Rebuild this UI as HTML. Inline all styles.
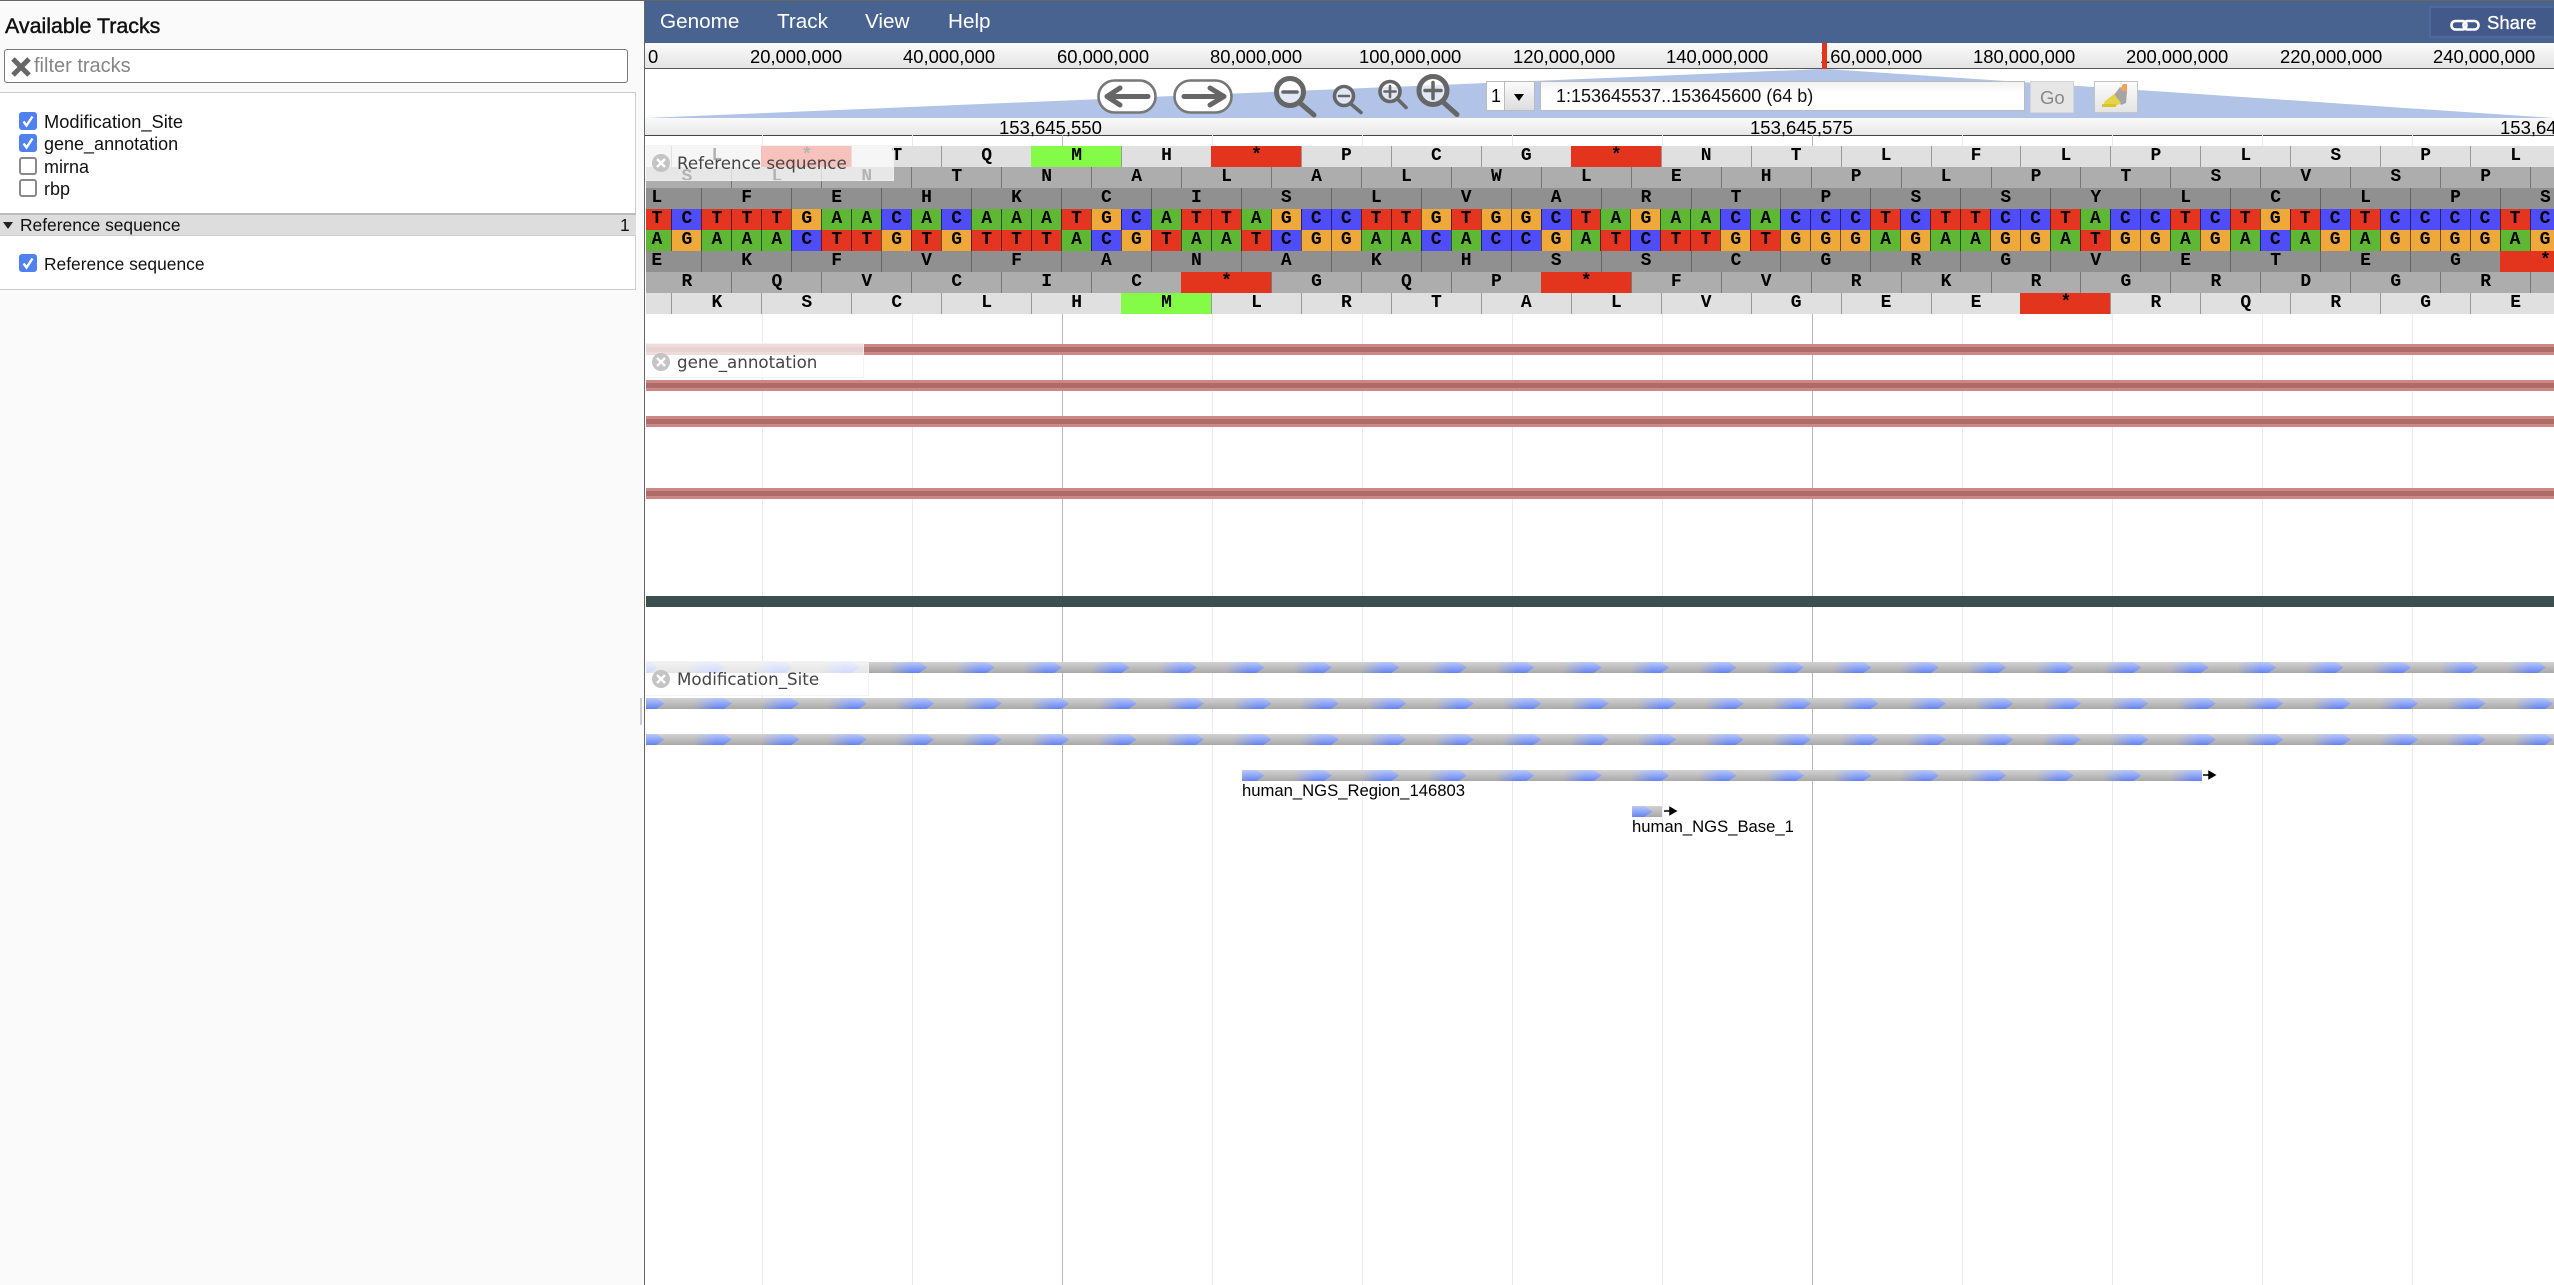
<!DOCTYPE html>
<html lang="en"><head><meta charset="utf-8"><title>JBrowse</title>
<style>
html,body{margin:0;padding:0;width:2554px;height:1285px;overflow:hidden;background:#fff;font-family:"Liberation Sans",Arial,sans-serif;color:#000}
.a{position:absolute;white-space:nowrap}
#left{left:0;top:0;width:644px;height:1285px;background:#fafafa}
#box{left:0;top:92px;width:635px;height:196px;background:#fff;border:1px solid #ccc;border-left:0}
#cat{left:0;top:213px;width:636px;height:20px;background:#ddd;border-top:2px solid #bbb;border-bottom:1px solid #ccc}
.it{font-size:18px;line-height:22px;color:#111;left:44px}
.cb{position:absolute;left:19px;width:18px;height:18px;box-sizing:border-box;border-radius:3px}
.cb.on{background:#4f81f0}
.cb.off{background:#fff;border:2px solid #8a8a8a}
.cb svg{position:absolute;left:0;top:0}
.ov{font-size:18.4px;line-height:22px;top:46px}
.gl{position:absolute;top:135px;height:1150px;width:1px;background:#ebebeb}
.gm{background:#b8b8b8}
#seq{position:absolute;left:646px;top:146px;width:1908px;height:168px;overflow:hidden}
.r{position:absolute;height:21px;display:flex}
.r b,.r i{flex:none;box-sizing:border-box;height:21px;font:bold 18px/21px "Liberation Mono",monospace;text-align:center;font-style:normal;color:#000}
.r b{width:89.94px;border-left:1px solid #777}
.r i{width:29.98px;border-left:1px solid rgba(0,0,0,.55)}
.l1 b{background:#e0e0e0;border-left-color:#999}
.l2 b{background:#adadad;border-left-color:#777}
.l3 b{background:#909090;border-left-color:#666}
.r b.x{background:#e3341d;border-left-color:#e3341d}
.r b.m{background:#84fb46;border-left-color:#84fb46}
.T{background:#e3351f}.C{background:#4f4cf9}.A{background:#5fb834}.G{background:#efa93a}
.lab{position:absolute;left:646px;box-sizing:border-box;background:rgba(255,255,255,.7);border:1px solid rgba(240,240,240,.8);border-left:0}
.lt{position:absolute;font:16.7px/20px "DejaVu Sans",sans-serif;color:#444;white-space:nowrap}
.fl{font-size:16.65px;line-height:20px;color:#000}
</style></head><body>

<div class="a" id="left"></div>
<div class="a" style="left:0;top:0;width:2554px;height:1px;background:#666;z-index:9"></div>
<div class="a" style="left:644px;top:0;width:1px;height:1285px;background:#666;z-index:9"></div>
<div class="a" style="left:640px;top:698px;width:2px;height:27px;background:#ccc"></div>

<div class="a" style="left:5px;top:13px;font-size:21.4px;line-height:26px;color:#111;-webkit-text-stroke:.45px #111">Available Tracks</div>
<div class="a" style="left:4px;top:49px;width:624px;height:34px;box-sizing:border-box;border:1px solid #777;border-radius:3px;background:#fff"></div>
<svg class="a" style="left:10px;top:56px" width="22" height="22" viewBox="0 0 22 22"><path d="M3 3L19 19M19 3L3 19" stroke="#666" stroke-width="5"/></svg>
<div class="a" style="left:34px;top:53px;font-size:20px;line-height:26px;color:#858585">filter tracks</div>

<div class="a" id="box"></div>
<div class="cb on" style="top:112px"><svg width="18" height="18"><path d="M4.5 9.5L7.5 13.5L13.5 4.5" fill="none" stroke="#fff" stroke-width="2.4"/></svg></div>
<div class="cb on" style="top:134px"><svg width="18" height="18"><path d="M4.5 9.5L7.5 13.5L13.5 4.5" fill="none" stroke="#fff" stroke-width="2.4"/></svg></div>
<div class="cb off" style="top:157px"></div>
<div class="cb off" style="top:179px"></div>
<div class="a it" style="top:111px;font-size:18.25px">Modification_Site</div>
<div class="a it" style="top:133px">gene_annotation</div>
<div class="a it" style="top:156px">mirna</div>
<div class="a it" style="top:178px">rbp</div>
<div class="a" id="cat"></div>
<div class="a" style="left:3px;top:222px;width:0;height:0;border-left:5.5px solid transparent;border-right:5.5px solid transparent;border-top:7px solid #222"></div>
<div class="a" style="left:20px;top:214px;font-size:17.4px;line-height:22px;color:#111">Reference sequence</div>
<div class="a" style="left:620px;top:214px;font-size:17.4px;line-height:22px;color:#111">1</div>
<div class="cb on" style="top:254px"><svg width="18" height="18"><path d="M4.5 9.5L7.5 13.5L13.5 4.5" fill="none" stroke="#fff" stroke-width="2.4"/></svg></div>
<div class="a it" style="top:253px;font-size:17.4px">Reference sequence</div>

<!-- menu -->
<div class="a" style="left:645px;top:1px;width:1909px;height:42px;background:#496390"></div>
<div class="a" style="left:660px;top:9px;font-size:20.7px;line-height:25px;color:#fff">Genome</div>
<div class="a" style="left:777px;top:9px;font-size:20.7px;line-height:25px;color:#fff">Track</div>
<div class="a" style="left:865px;top:9px;font-size:20.7px;line-height:25px;color:#fff">View</div>
<div class="a" style="left:948px;top:9px;font-size:20.7px;line-height:25px;color:#fff">Help</div>
<div class="a" style="left:2429px;top:6px;width:124px;height:32px;box-sizing:border-box;background:#42598a;border:2px solid #51699a;border-right:0"></div>
<svg class="a" style="left:2450px;top:17px" width="30" height="16" viewBox="0 0 30 16"><rect x="1.5" y="4" width="15" height="8.5" rx="4" fill="none" stroke="#fff" stroke-width="2.6"/><rect x="13.5" y="4" width="15" height="8.5" rx="4" fill="none" stroke="#fff" stroke-width="2.6"/></svg>
<div class="a" style="left:2487px;top:12px;font-size:18.5px;line-height:22px;color:#fff;-webkit-text-stroke:.3px #fff">Share</div>

<!-- overview -->
<div class="a" style="left:645px;top:43px;width:1909px;height:25px;background:linear-gradient(#fbfbfb,#e4e4e4);border-bottom:1px solid #555"></div>
<div class="a ov" style="left:648px">0</div>
<div class="a ov" style="left:750px">20,000,000</div>
<div class="a ov" style="left:903px">40,000,000</div>
<div class="a ov" style="left:1057px">60,000,000</div>
<div class="a ov" style="left:1210px">80,000,000</div>
<div class="a ov" style="left:1359px">100,000,000</div>
<div class="a ov" style="left:1513px">120,000,000</div>
<div class="a ov" style="left:1666px">140,000,000</div>
<div class="a ov" style="left:1820px">160,000,000</div>
<div class="a ov" style="left:1973px">180,000,000</div>
<div class="a ov" style="left:2126px">200,000,000</div>
<div class="a ov" style="left:2280px">220,000,000</div>
<div class="a ov" style="left:2433px">240,000,000</div>
<div class="a" style="left:1822px;top:43px;width:5px;height:26px;background:#e3341d"></div>

<!-- nav area with polygon and icons -->
<svg class="a" style="left:0;top:0" width="2554" height="120" viewBox="0 0 2554 120">
<polygon points="1822,69 1827,69 2554,118 646,118" fill="#b1c3e7"/>
<rect x="1098.5" y="80.5" width="57" height="32" rx="16" fill="#fff" stroke="#777" stroke-width="2.6"/>
<rect x="1174.5" y="80.5" width="57" height="32" rx="16" fill="#fff" stroke="#777" stroke-width="2.6"/>
<g fill="none" stroke="#666" stroke-width="5" stroke-linecap="round" stroke-linejoin="round">
<path d="M1148 96.5H1107M1120 88L1107 96.5L1120 105"/>
<path d="M1184 96.5H1224M1210 88L1224 96.5L1210 105"/>
<circle cx="1290" cy="92" r="13.5" fill="#fff" fill-opacity=".6"/><path d="M1300 103L1314 115"/><path d="M1283 92H1297" stroke-width="3.5"/>
<circle cx="1344" cy="96" r="9.5" fill="#fff" fill-opacity=".6" stroke-width="3.6"/><path d="M1351 104L1361 112.5" stroke-width="3.6"/><path d="M1339 96H1349" stroke-width="2.6"/>
<circle cx="1390" cy="91.5" r="10" fill="#fff" fill-opacity=".6" stroke-width="3.6"/><path d="M1397.5 99L1406 107.5" stroke-width="3.6"/><path d="M1384.5 91.5H1395.5M1390 86V97" stroke-width="2.6"/>
<circle cx="1433" cy="90.5" r="14" fill="#fff" fill-opacity=".6"/><path d="M1443 102L1457 114.5"/><path d="M1425 90.5H1441M1433 82.5V98.5" stroke-width="3.5"/>
</g>
</svg>

<!-- ref select / location -->
<div class="a" style="left:1486px;top:81px;width:48px;height:30px;box-sizing:border-box;border:1px solid #bbb;background:#fff"></div>
<div class="a" style="left:1504px;top:81px;width:31px;height:30px;box-sizing:border-box;border:1px solid #bbb;background:linear-gradient(#fbfbfb,#ddd)"></div>
<div class="a" style="left:1491px;top:84px;font-size:18px;line-height:24px">1</div>
<div class="a" style="left:1514px;top:94px;width:0;height:0;border-left:5.5px solid transparent;border-right:5.5px solid transparent;border-top:7px solid #000"></div>
<div class="a" style="left:1540px;top:81px;width:485px;height:30px;box-sizing:border-box;border:1px solid #bbb;background:linear-gradient(#f2f2f2,#fff 40%)"></div>
<div class="a" style="left:1556px;top:84px;font-size:18px;line-height:24px;color:#111">1:153645537..153645600 (64 b)</div>
<div class="a" style="left:2030px;top:81px;width:44px;height:32px;box-sizing:border-box;border:1px solid #d5d5d5;background:#e6e6e6"></div>
<div class="a" style="left:2040px;top:86px;font-size:18.5px;line-height:24px;color:#888">Go</div>
<div class="a" style="left:2094px;top:81px;width:44px;height:32px;box-sizing:border-box;border:1.5px solid #c4c4c4;background:linear-gradient(#fcfcfc,#e4e4e4)"></div>
<svg class="a" style="left:2100px;top:83px" width="30" height="26" viewBox="0 0 30 26">
<path d="M14 12L20 4L27 9L26 20L21 22Z" fill="#a5a5a5"/>
<path d="M20 7L23 1H27V9Z" fill="#eea35c"/>
<path d="M3 22L5 18L14 11L21 20L16 23H12Z" fill="#e6d34c"/>
<path d="M2 21H16V24H2Z" fill="#dcc422"/>
</svg>

<!-- track scale -->
<div class="a" style="left:645px;top:118px;width:1909px;height:17px;background:linear-gradient(#fafafa,#e9e9e9);border-bottom:1px solid #444"></div>
<div class="gl" style="left:762px"></div><div class="gl" style="left:912px"></div><div class="gl gm" style="left:1062px"></div>
<div class="gl" style="left:1212px"></div><div class="gl" style="left:1362px"></div><div class="gl" style="left:1512px"></div>
<div class="gl" style="left:1662px"></div><div class="gl gm" style="left:1812px"></div><div class="gl" style="left:1962px"></div>
<div class="gl" style="left:2112px"></div><div class="gl" style="left:2262px"></div><div class="gl" style="left:2412px"></div>
<div class="a" style="left:999px;top:117px;font-size:18.5px;line-height:22px">153,645,550</div>
<div class="a" style="left:1750px;top:117px;font-size:18.5px;line-height:22px">153,645,575</div>
<div class="a" style="left:2500px;top:117px;font-size:18.5px;line-height:22px">153,645,600</div>

<!-- sequence -->
<div id="seq">
<div class="r l1" style="top:0;left:-64.54px"><b></b><b>L</b><b class="x">*</b><b>T</b><b>Q</b><b class="m">M</b><b>H</b><b class="x">*</b><b>P</b><b>C</b><b>G</b><b class="x">*</b><b>N</b><b>T</b><b>L</b><b>F</b><b>L</b><b>P</b><b>L</b><b>S</b><b>P</b><b>L</b></div>
<div class="r l2" style="top:21px;left:-4.54px"><b>S</b><b>L</b><b>N</b><b>T</b><b>N</b><b>A</b><b>L</b><b>A</b><b>L</b><b>W</b><b>L</b><b>E</b><b>H</b><b>P</b><b>L</b><b>P</b><b>T</b><b>S</b><b>V</b><b>S</b><b>P</b><b></b></div>
<div class="r l3" style="top:42px;left:-34.74px"><b>L</b><b>F</b><b>E</b><b>H</b><b>K</b><b>C</b><b>I</b><b>S</b><b>L</b><b>V</b><b>A</b><b>R</b><b>T</b><b>P</b><b>S</b><b>S</b><b>Y</b><b>L</b><b>C</b><b>L</b><b>P</b><b>S</b></div>
<div class="r" style="top:63px;left:-4.54px"><i class="T">T</i><i class="C">C</i><i class="T">T</i><i class="T">T</i><i class="T">T</i><i class="G">G</i><i class="A">A</i><i class="A">A</i><i class="C">C</i><i class="A">A</i><i class="C">C</i><i class="A">A</i><i class="A">A</i><i class="A">A</i><i class="T">T</i><i class="G">G</i><i class="C">C</i><i class="A">A</i><i class="T">T</i><i class="T">T</i><i class="A">A</i><i class="G">G</i><i class="C">C</i><i class="C">C</i><i class="T">T</i><i class="T">T</i><i class="G">G</i><i class="T">T</i><i class="G">G</i><i class="G">G</i><i class="C">C</i><i class="T">T</i><i class="A">A</i><i class="G">G</i><i class="A">A</i><i class="A">A</i><i class="C">C</i><i class="A">A</i><i class="C">C</i><i class="C">C</i><i class="C">C</i><i class="T">T</i><i class="C">C</i><i class="T">T</i><i class="T">T</i><i class="C">C</i><i class="C">C</i><i class="T">T</i><i class="A">A</i><i class="C">C</i><i class="C">C</i><i class="T">T</i><i class="C">C</i><i class="T">T</i><i class="G">G</i><i class="T">T</i><i class="C">C</i><i class="T">T</i><i class="C">C</i><i class="C">C</i><i class="C">C</i><i class="C">C</i><i class="T">T</i><i class="C">C</i></div>
<div class="r" style="top:84px;left:-4.54px"><i class="A">A</i><i class="G">G</i><i class="A">A</i><i class="A">A</i><i class="A">A</i><i class="C">C</i><i class="T">T</i><i class="T">T</i><i class="G">G</i><i class="T">T</i><i class="G">G</i><i class="T">T</i><i class="T">T</i><i class="T">T</i><i class="A">A</i><i class="C">C</i><i class="G">G</i><i class="T">T</i><i class="A">A</i><i class="A">A</i><i class="T">T</i><i class="C">C</i><i class="G">G</i><i class="G">G</i><i class="A">A</i><i class="A">A</i><i class="C">C</i><i class="A">A</i><i class="C">C</i><i class="C">C</i><i class="G">G</i><i class="A">A</i><i class="T">T</i><i class="C">C</i><i class="T">T</i><i class="T">T</i><i class="G">G</i><i class="T">T</i><i class="G">G</i><i class="G">G</i><i class="G">G</i><i class="A">A</i><i class="G">G</i><i class="A">A</i><i class="A">A</i><i class="G">G</i><i class="G">G</i><i class="A">A</i><i class="T">T</i><i class="G">G</i><i class="G">G</i><i class="A">A</i><i class="G">G</i><i class="A">A</i><i class="C">C</i><i class="A">A</i><i class="G">G</i><i class="A">A</i><i class="G">G</i><i class="G">G</i><i class="G">G</i><i class="G">G</i><i class="A">A</i><i class="G">G</i></div>
<div class="r l3" style="top:105px;left:-34.74px"><b>E</b><b>K</b><b>F</b><b>V</b><b>F</b><b>A</b><b>N</b><b>A</b><b>K</b><b>H</b><b>S</b><b>S</b><b>C</b><b>G</b><b>R</b><b>G</b><b>V</b><b>E</b><b>T</b><b>E</b><b>G</b><b class="x">*</b></div>
<div class="r l2" style="top:126px;left:-4.54px"><b>R</b><b>Q</b><b>V</b><b>C</b><b>I</b><b>C</b><b class="x">*</b><b>G</b><b>Q</b><b>P</b><b class="x">*</b><b>F</b><b>V</b><b>R</b><b>K</b><b>R</b><b>G</b><b>R</b><b>D</b><b>G</b><b>R</b><b></b></div>
<div class="r l1" style="top:147px;left:-64.54px"><b></b><b>K</b><b>S</b><b>C</b><b>L</b><b>H</b><b class="m">M</b><b>L</b><b>R</b><b>T</b><b>A</b><b>L</b><b>V</b><b>G</b><b>E</b><b>E</b><b class="x">*</b><b>R</b><b>Q</b><b>R</b><b>G</b><b>E</b></div>
</div>

<!-- features -->
<svg class="a" style="left:0;top:0" width="2554" height="860" viewBox="0 0 2554 860">
<defs>
<linearGradient id="gb" x1="0" y1="0" x2="0" y2="11" gradientUnits="userSpaceOnUse"><stop offset="0" stop-color="#d2d2d2"/><stop offset="1" stop-color="#a8a8a8"/></linearGradient>
<linearGradient id="bl" x1="0" y1="0" x2="0" y2="11" gradientUnits="userSpaceOnUse"><stop offset="0" stop-color="#b8c8fb"/><stop offset="1" stop-color="#6583ef"/></linearGradient>
<linearGradient id="hf" x1="22" y1="0" x2="44" y2="0" gradientUnits="userSpaceOnUse"><stop offset="0" stop-color="#fff" stop-opacity="0"/><stop offset="1" stop-color="#fff"/></linearGradient>
<mask id="mk" maskUnits="userSpaceOnUse" x="0" y="-4" width="68" height="20"><path d="M16 -3H48L60.5 5.5L48 14H16Z" fill="url(#hf)"/></mask>
<pattern id="ch" width="67.45" height="11" patternUnits="userSpaceOnUse">
<rect width="67.45" height="11" fill="url(#gb)"/>
<rect x="0" y="0" width="67.45" height="11" fill="url(#bl)" mask="url(#mk)"/>
</pattern>
</defs>
<g>
<rect x="646" y="344" width="1908" height="11" fill="#cd8785"/><rect x="646" y="347" width="1908" height="5" fill="#ad6b69"/>
<rect x="646" y="380" width="1908" height="11" fill="#cd8785"/><rect x="646" y="383" width="1908" height="5" fill="#ad6b69"/>
<rect x="646" y="416" width="1908" height="11" fill="#cd8785"/><rect x="646" y="419" width="1908" height="5" fill="#ad6b69"/>
<rect x="646" y="488" width="1908" height="11" fill="#cd8785"/><rect x="646" y="491" width="1908" height="5" fill="#ad6b69"/>
<rect x="646" y="596" width="1908" height="11" fill="#3b4e50"/>
</g>
<g transform="translate(866.7,662)"><rect x="-220.7" y="0" width="1908" height="11" fill="url(#ch)"/></g>
<g transform="translate(604,698)"><rect x="42" y="0" width="1908" height="11" fill="url(#ch)"/></g>
<g transform="translate(604,734)"><rect x="42" y="0" width="1908" height="11" fill="url(#ch)"/></g>
<g transform="translate(1204,770)"><rect x="38" y="0" width="960" height="11" fill="url(#ch)"/></g>
<g transform="translate(1592,806)"><rect x="40" y="0" width="30" height="11" fill="url(#ch)"/></g>
<path d="M2203 775H2212M2209 771.5L2215 775L2209 778.5Z" stroke="#000" stroke-width="1.5" fill="#000"/>
<path d="M1664 811H1673M1670 807.5L1676 811L1670 814.5Z" stroke="#000" stroke-width="1.5" fill="#000"/>
</svg>
<div class="a fl" style="left:1242px;top:781px">human_NGS_Region_146803</div>
<div class="a fl" style="left:1632px;top:817px">human_NGS_Base_1</div>

<!-- track labels -->
<div class="lab" style="top:145px;width:248px;height:36px"></div>
<div class="lab" style="top:343px;width:218px;height:35px"></div>
<div class="lab" style="top:661px;width:223px;height:35px"></div>
<div class="lt" style="left:677px;top:153px">Reference sequence</div>
<div class="lt" style="left:677px;top:352px">gene_annotation</div>
<div class="lt" style="left:677px;top:669px">Modification_Site</div>
<svg class="a" style="left:0;top:0" width="700" height="700" viewBox="0 0 700 700">
<g><circle cx="661" cy="163" r="9" fill="#c4c4c4"/><path d="M657 159L665 167M665 159L657 167" stroke="#fff" stroke-width="2.4"/></g>
<g><circle cx="661" cy="362" r="9" fill="#c4c4c4"/><path d="M657 358L665 366M665 358L657 366" stroke="#fff" stroke-width="2.4"/></g>
<g><circle cx="661" cy="679" r="9" fill="#c4c4c4"/><path d="M657 675L665 683M665 675L657 683" stroke="#fff" stroke-width="2.4"/></g>
</svg>
</body></html>
